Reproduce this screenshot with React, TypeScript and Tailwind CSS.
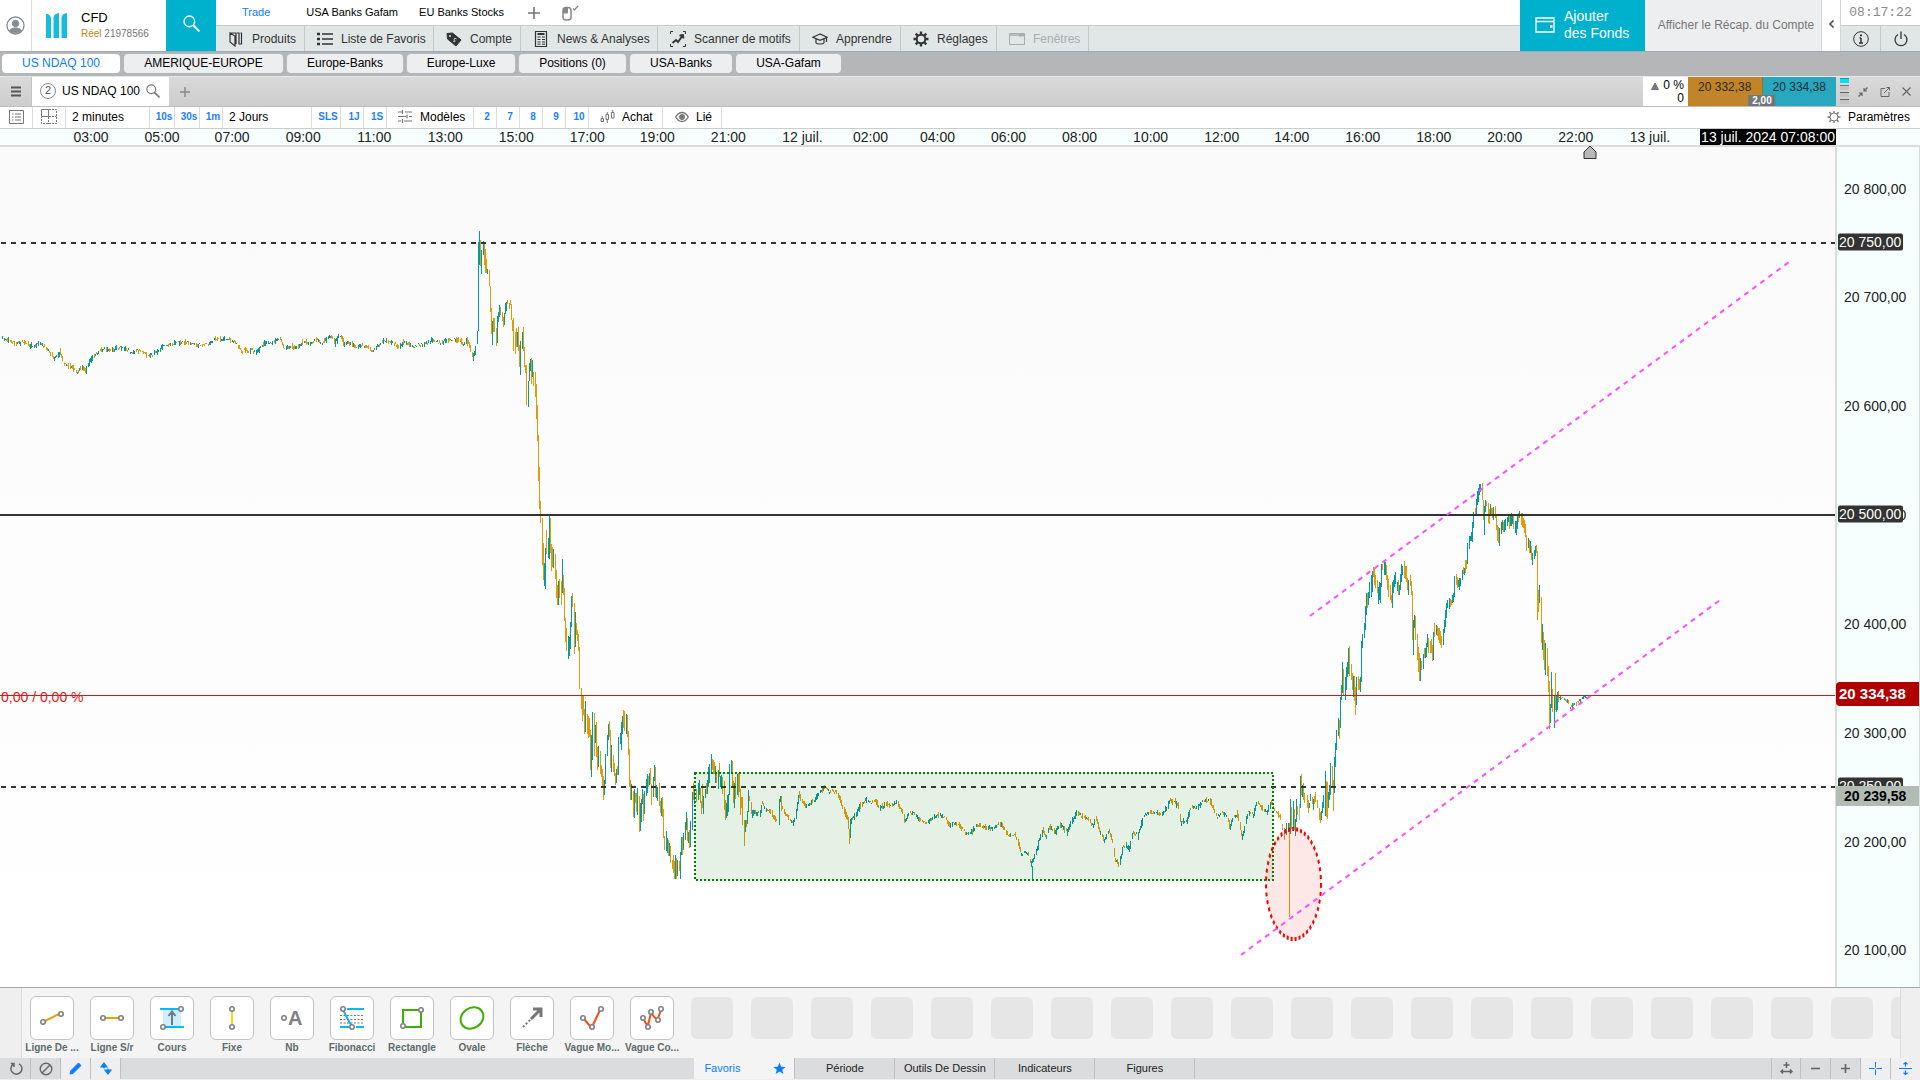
import React from 'react';

const TEAL = '#069b9b';
const ORANGE = '#e39a08';

/* ---------- chart data (pixel space of the plot: x 0..1835, y 147..987) ---------- */

const QUIET: number[][][] = [
  [[2,338],[8,340],[16,344],[22,342],[33,346],[40,343],[47,349],[54,358],[60,353],[64,364],[70,366],[77,372],[80,368],[86,371],[89,362],[92,357],[98,352],[104,349],[112,350],[119,347],[126,349],[131,353],[138,351],[144,353],[150,356],[156,352],[163,346],[176,343],[188,342],[198,345],[210,344],[214,340],[229,339],[237,344],[242,352],[245,349],[248,353],[251,349],[256,354],[260,347],[265,343],[273,343],[280,339],[284,348],[291,346],[296,349],[304,341],[309,345],[316,339],[321,343],[328,338],[331,336],[335,343],[338,337],[341,336],[344,344],[351,343],[355,347],[361,345],[367,347],[373,351],[380,343],[386,341],[392,342],[399,347],[404,342],[414,346],[424,344],[433,340],[440,343],[449,339],[459,340],[463,344],[467,340],[471,352],[473,356],[476,346]],
  [[755,812],[760,814],[762,803],[765,808],[770,811],[774,818],[778,820]],
  [[782,808],[785,814],[790,821],[793,823],[796,815],[798,799],[799,795],[803,803],[806,806],[810,804],[815,799],[820,791],[825,787],[829,792],[832,790],[836,793],[840,800],[843,808],[846,815],[850,825],[852,818],[856,814],[860,806],[865,800],[870,803],[875,801],[880,809],[885,804],[890,806],[897,803],[902,811],[905,821],[909,812],[915,815],[920,820],[927,823],[937,815],[945,817],[950,827],[953,823],[960,826],[966,834],[970,834],[977,825],[987,827],[993,828],[997,824],[1002,825],[1008,835],[1015,835],[1018,842],[1021,855],[1024,852],[1028,855],[1031,865],[1034,857],[1036,853],[1039,840],[1043,830],[1046,837],[1049,827],[1055,832],[1060,824],[1067,832],[1072,820],[1077,812],[1082,817],[1087,818],[1093,825],[1096,817],[1100,833],[1104,840],[1109,832],[1113,843],[1115,860],[1119,865],[1122,852],[1123,845],[1129,848],[1133,833],[1138,835],[1143,818],[1148,812],[1157,813],[1162,814],[1166,808],[1170,800],[1175,802],[1178,807],[1181,823],[1187,820],[1190,808],[1197,808],[1203,800],[1210,802],[1217,817],[1222,812],[1227,817],[1230,827],[1233,817],[1237,815],[1240,827],[1242,837],[1246,820],[1248,812],[1253,815],[1257,802],[1263,810],[1267,812],[1271,802],[1275,812],[1280,818],[1283,830]],
  [[1559,697],[1564,699],[1568,702],[1570,708],[1573,705],[1578,702],[1583,697],[1590,696]],
];

/* x, high, low, direction (t = up, o = down) */
const ACTIVE = `477 331 344 t,478 242 331 t,479 231 265 t,480 240 266 o,481 250 274 t,483 241 255 t,484 242 265 o,485 249 273 o,486 259 273 o,487 269 274 t,489 270 286 o,490 286 312 o,491 308 334 o,492 321 345 t,493 318 332 o,494 318 332 o,496 328 346 o,497 316 343 t,498 312 322 t,499 305 317 t,500 307 315 o,502 312 321 o,503 317 327 o,504 313 325 t,505 303 314 t,506 302 311 t,507 300 304 o,509 303 309 o,510 300 305 o,511 304 320 o,512 320 331 o,513 318 351 o,515 332 354 o,516 328 347 o,517 332 347 t,518 327 351 o,519 345 367 o,520 341 375 t,522 332 349 t,523 327 351 o,524 347 367 o,525 365 373 o,526 365 405 o,528 381 407 t,529 363 381 t,530 359 371 t,531 358 384 o,532 360 377 t,533 372 386 o,535 372 397 o,536 384 419 o,537 405 441 o,538 435 481 o,539 467 509 o,540 501 523 o,
542 518 565 o,543 543 580 o,544 563 586 t,545 548 589 t,546 530 554 o,548 538 558 t,549 516 559 t,550 518 553 o,551 544 571 o,552 547 567 o,553 549 568 t,555 554 579 o,556 570 598 o,557 585 605 o,558 581 605 t,559 579 598 o,561 581 605 o,562 559 593 t,563 575 595 o,564 588 621 o,565 618 642 o,566 628 651 o,568 636 659 t,569 637 656 t,570 622 649 t,571 596 627 t,572 593 607 o,574 603 654 o,575 612 647 t,576 623 635 o,577 630 641 o,578 634 651 o,579 647 689 o,581 688 709 o,582 695 721 o,583 695 715 o,584 709 734 o,585 701 732 t,587 714 734 o,588 716 738 o,589 718 737 o,590 730 770 o,591 735 777 t,592 712 760 t,594 713 756 o,595 725 743 t,596 722 757 o,597 747 770 o,598 746 767 t,600 751 774 o,601 765 777 o,602 769 786 o,603 776 800 o,604 780 795 t,605 754 784 t,607 735 756 t,608 724 740 t,609 721 737 o,610 730 768 o,611 745 772 t,613 755 772 o,614 763 776 o,615 773 785 o,616 769 783 t,617 766 775 o,618 737 775 t,620 733 744 t,621 722 750 t,622 716 734 t,623 710 728 o,624 711 731 o,626 714 734 t,627 715 737 o,628 731 755 o,629 749 787 o,630 780 800 o,631 784 800 t,633 791 817 o,634 789 818 t,635 793 803 o,636 793 812 o,637 788 815 t,639 796 832 o,640 803 831 t,641 799 822 t,642 789 804 t,643 794 821 o,644 791 814 t,646 779 796 t,647 774 793 t,648 776 787 o,649 773 785 t,650 768 784 o,651 784 805 o,653 777 797 t,654 765 781 t,655 767 797 o,656 785 798 t,657 787 801 t,659 783 806 o,660 801 813 o,661 798 816 t,662 797 817 o,663 809 838 o,664 836 850 o,666 831 851 t,667 838 853 t,668 840 856 o,669 843 856 t,670 846 863 o,672 860 869 o,673 855 873 o,674 861 879 o,675 855 879 t,676 858 879 o,677 860 876 t,679 861 871 o,680 852 879 t,681 837 855 t,682 837 855 o,683 833 850 t,685 822 840 t,686 812 830 t,687 818 841 o,688 832 843 t,689 830 848 o,690 821 847 t,692 792 830 t,693 783 800 o,694 789 804 t,696 789 802 o,698 783 800 t,699 780 795 t,700 788 803 o,701 801 814 o,702 784 808 o,703 796 814 t,705 789 798 t,706 783 794 o,707 780 794 t,708 767 787 t,709 764 783 t,711 754 774 t,712 759 770 o,713 760 774 o,714 762 774 o,715 766 783 t,716 773 783 o,718 770 789 t,719 763 777 o,720 776 787 t,721 775 789 t,722 777 794 o,724 781 810 o,725 800 820 o,726 803 818 t,727 795 816 t,728 794 812 t,729 764 795 t,731 760 774 t,732 761 787 o,733 781 803 o,734 783 808 t,735 777 799 o,737 774 795 t,738 773 797 o,739 773 792 o,740 789 815 o,741 797 808 o,742 797 825 o,744 820 846 o,745 820 832 t,746 820 827 o,747 811 824 t,748 790 812 t,749 796 801 o,751 802 814 o,752 810 818 t,753 810 816 t,754 810 814 t,
779 799 825 t,780 796 802 t,781 796 811 o,848 820 829 o,849 829 844 o,850 819 838 t,1032 866 879 t,
1284 828 840 o,1286 823 835 t,1288 823 832 t,1289 823 917 o,1290 799 834 t,1291 807 829 o,1293 801 828 t,1294 809 830 o,1295 819 836 t,1296 799 822 t,1297 806 815 o,1300 776 808 t,1301 774 795 o,1302 785 797 t,1303 783 800 o,1304 793 803 o,1307 795 808 o,1308 800 813 o,1309 803 808 t,1310 794 801 t,1312 797 804 o,1313 799 810 t,1314 796 804 o,1315 792 802 o,1317 800 808 o,1319 808 820 o,1320 812 823 o,1321 811 820 t,1322 802 813 t,1323 795 808 t,1325 771 816 t,1326 781 817 o,1327 782 819 o,1328 792 808 t,1329 785 800 t,1330 763 795 t,1332 766 787 o,1333 780 811 o,1334 757 793 t,1335 743 767 t,1336 730 750 t,1338 718 736 t,1339 720 739 o,1340 697 728 t,1341 685 700 t,1342 662 693 t,1343 669 695 o,1345 677 700 t,1346 667 690 t,1347 662 677 t,1348 648 674 t,1349 646 676 o,1351 664 680 o,1352 673 690 o,1353 676 697 t,1354 676 701 o,1355 687 715 o,1356 677 705 t,1358 676 690 o,1359 679 690 o,1360 677 692 t,1361 641 682 t,1362 634 648 t,1364 623 638 t,1365 606 630 t,1366 593 615 t,1367 593 608 o,1368 592 605 t,1369 582 598 t,1371 575 597 t,1372 571 592 t,1373 567 577 o,1374 568 585 o,1375 575 588 o,1377 580 593 o,1378 587 604 t,1379 582 600 t,1380 583 603 t,1381 564 587 t,1382 564 570 o,1384 562 575 t,1385 562 575 t,1386 565 580 o,1387 575 590 o,1388 579 597 o,1390 585 600 o,1391 595 603 o,1392 582 608 t,1393 580 593 t,1394 575 587 t,1395 572 584 t,1397 582 591 t,1398 580 595 o,1399 585 595 t,1400 574 590 t,1401 564 582 t,1402 566 575 t,1404 561 578 o,1405 566 579 o,1406 566 582 o,1407 578 590 o,1408 580 595 t,1410 575 586 o,1411 581 595 o,1412 591 640 o,1413 620 655 t,1414 615 628 t,1415 616 640 o,1417 634 660 o,1418 647 672 o,1419 653 681 o,1420 658 681 t,1421 661 670 o,1423 654 669 t,1424 648 658 o,1425 648 658 t,1426 643 657 t,1427 634 647 t,1428 638 653 o,1430 641 653 o,1431 639 653 o,1432 645 661 o,1433 632 660 t,1434 623 637 o,1436 625 635 t,1437 626 636 o,1438 628 640 o,1439 628 643 o,1440 631 645 o,1441 636 648 o,1443 629 645 t,1444 620 633 t,1445 610 627 t,1446 603 618 t,1447 600 608 t,1449 598 609 t,1450 599 607 o,1451 600 605 o,1452 595 603 t,1453 593 602 t,1454 576 597 t,1456 574 585 o,1457 577 588 o,1458 580 587 t,1459 578 590 t,1460 578 586 t,1462 570 580 t,1463 567 574 o,1464 568 575 t,1465 560 573 o,1466 560 569 o,1467 543 564 t,1469 536 549 t,1470 536 541 t,1471 532 541 t,1472 522 542 t,1473 512 528 t,1475 508 516 o,1476 499 515 t,1477 491 505 t,1478 488 502 t,1479 484 495 t,1480 484 492 t,1482 483 500 o,1483 500 520 o,1484 506 535 t,1485 500 512 t,1486 501 506 o,1488 503 523 o,1489 509 524 o,1490 504 516 t,1491 508 515 o,1492 508 518 o,1493 507 520 t,1495 506 518 o,1496 514 530 o,1497 525 541 o,1498 527 543 o,1499 528 546 t,1501 522 534 t,1502 520 530 t,1503 522 532 o,1504 520 532 t,1505 519 530 t,1507 517 526 t,1508 514 522 t,1509 515 529 o,1510 515 526 t,1511 513 526 t,1512 514 524 t,1513 515 529 o,1515 521 533 t,1516 521 535 t,1517 514 529 t,1518 513 522 o,1519 511 518 t,1521 513 525 o,1522 513 527 o,1523 518 528 o,1524 520 533 o,1525 524 537 o,1526 535 551 o,1528 538 548 t,1529 540 553 o,1530 541 553 t,1531 546 560 o,1532 553 565 t,1534 550 559 t,1535 546 556 t,1536 545 553 o,1537 551 620 o,1538 590 612 o,1539 585 603 t,1541 597 643 o,1542 624 650 t,1543 632 660 o,1544 640 670 o,1545 643 675 t,1547 648 676 o,1548 666 692 o,1549 681 729 o,1550 704 723 t,1551 672 708 t,1552 689 712 o,1554 695 728 t,1555 673 710 o,1556 695 712 t,1557 692 710 t,1558 691 702 o`;

function buildPaths() {
  let up = '';
  let down = '';
  const add = (x: number, hi: number, lo: number, isUp: boolean) => {
    const seg = `M${x} ${hi}h1V${lo}h-1z`;
    if (isUp) up += seg;
    else down += seg;
  };
  let seed = 11;
  const rnd = () => {
    seed = (seed * 1103515245 + 12345) % 2147483648;
    return seed / 2147483648;
  };
  for (const pts of QUIET) {
    const calm = pts[0][0] === 1559;
    for (let i = 0; i < pts.length - 1; i++) {
      const [x0, y0] = pts[i];
      const [x1, y1] = pts[i + 1];
      for (let x = x0; x < x1; x++) {
        const r = rnd();
        const q = rnd();
        if (x % 6 === 3) continue;
        const slope = (y1 - y0) / (x1 - x0);
        const mid = y0 + slope * (x - x0) + (q - 0.5) * 2.4;
        const size = 0.8 + r * r * (calm ? 3 : 5) + Math.abs(slope);
        const hi = Math.round(mid - size / 2);
        add(x, hi, hi + Math.max(1, Math.round(size)), rnd() > 0.5 + slope * 0.25);
      }
    }
  }
  for (const bar of ACTIVE.split(',')) {
    const [x, hi, lo, dir] = bar.trim().split(' ');
    add(+x, +hi, +lo, dir === 't');
  }
  return { up, down };
}
const PATHS = buildPaths();

const TIMES: [string, number][] = [
  ['03:00', 91], ['05:00', 162], ['07:00', 232], ['09:00', 303], ['11:00', 374], ['13:00', 445], ['15:00', 516],
  ['17:00', 587], ['19:00', 657], ['21:00', 728], ['12 juil.', 802], ['02:00', 870], ['04:00', 937], ['06:00', 1008],
  ['08:00', 1079], ['10:00', 1150], ['12:00', 1221], ['14:00', 1291], ['16:00', 1362], ['18:00', 1433], ['20:00', 1504],
  ['22:00', 1575], ['13 juil.', 1649],
];
const PRICES: [string, number][] = [
  ['20 800,00', 189], ['20 700,00', 297], ['20 600,00', 406], ['20 500,00', 515], ['20 400,00', 624],
  ['20 300,00', 733], ['20 200,00', 842], ['20 100,00', 950],
];
const pctX = (x: number) => `${(x / 1835) * 100}%`;
const pctY = (y: number) => `${((y - 147) / 840) * 100}%`;

/* ---------- icons ---------- */

type P = { children: React.ReactNode; w?: number; h?: number; vb?: string; sw?: number; c?: string };
const Ic = ({ children, w = 16, h = 16, vb = '0 0 16 16', sw = 1, c = '' }: P) => (
  <svg width={w} height={h} viewBox={vb} fill="none" stroke="currentColor" strokeWidth={sw} className={`shrink-0 ${c}`} aria-hidden="true">
    {children}
  </svg>
);
const Magnifier = ({ size, sw = 1 }: { size: number; sw?: number }) => (
  <Ic w={size} h={size} sw={sw}><circle cx="6" cy="6" r="5" /><path d="M9.6 9.6L15.4 15.4" strokeWidth={sw * 1.4} /></Ic>
);
const Dot = ({ x, y }: { x: number; y: number }) => <circle cx={x} cy={y} r="2.2" stroke="#808080" strokeWidth="1.6" fill="#fff" />;

const NAV: { label: string; w: string; icon: React.ReactNode; off?: boolean }[] = [
  { label: 'Produits', w: 'w-[89px]', icon: <Ic><path d="M2 2h6v11M2 2v9l5 4V5L2 2zM9 2h2v11M12.5 2h1v11h-3" strokeWidth="1.2" /></Ic> },
  { label: 'Liste de Favoris', w: 'w-[129px]', icon: <Ic><path d="M5 3h11M5 8h11M5 13h11" strokeWidth="1.4" /><path d="M0 3h3M0 8h3M0 13h3" strokeWidth="2.4" /></Ic> },
  { label: 'Compte', w: 'w-[87px]', icon: <Ic><path d="M1 2.5L6.5 2 15 9l-5 6L1.5 8z" fill="currentColor" /><circle cx="4" cy="5" r="1" fill="#e1e7e7" stroke="none" /><path d="M10.5 8c-2-1.5-3 0-2 1s.5 2.500-1.500 1" stroke="#e1e7e7" /></Ic> },
  { label: 'News & Analyses', w: 'w-[137px]', icon: <Ic><path d="M2.500.5h11v15h-11z" strokeWidth="1.2" /><path d="M4.500 3h7" strokeWidth="2" /><path d="M4.500 6h3M9 6h3M4.500 8.500h3M9 8.500h3M4.500 11h3M9 11h3M4.500 13.200h3M9 13.200h3" /></Ic> },
  { label: 'Scanner de motifs', w: 'w-[142px]', icon: <Ic><path d="M.5 3V.5H3M13 .5h2.500V3M15.500 13v2.500H13M3 15.500H.5V13" /><path d="M2.500 12l3.500-3 2 2 5-7M9.500 4.500l3.500-.5.5 3.500" strokeWidth="1.8" /></Ic> },
  { label: 'Apprendre', w: 'w-[101px]', icon: <Ic><path d="M8 3L.8 6.200 8 9.300l7.200-3.100zM4 8v4c1 1.300 7 1.300 8 0V8M14.500 7v4" strokeWidth="1.200" /></Ic> },
  { label: 'Réglages', w: 'w-[96px]', icon: <Ic><circle cx="8" cy="8" r="4.300" strokeWidth="2" /><path d="M8 .5v3M8 12.500v3M.5 8h3M12.500 8h3M2.700 2.700l2 2M11.300 11.300l2 2M13.300 2.700l-2 2M2.700 13.300l2-2" strokeWidth="2.400" /></Ic> },
  { label: 'Fenêtres', w: 'w-[92px]', off: true, icon: <Ic><path d="M.5 2.500h15v11H.5z" /><path d="M1 4h9" strokeWidth="1.500" /><path d="M10 4h5.500" strokeWidth="3" /></Ic> },
];

const TABS: [string, string][] = [
  ['US NDAQ 100', 'w-[118px]'], ['AMERIQUE-EUROPE', 'w-[159px]'], ['Europe-Banks', 'w-[116px]'], ['Europe-Luxe', 'w-[108px]'],
  ['Positions (0)', 'w-[107px]'], ['USA-Banks', 'w-[102px]'], ['USA-Gafam', 'w-[105px]'],
];

const TOOLS: [string, React.ReactNode][] = [
  ['Ligne De ...', <><path d="M15 25L29 18" stroke="#dba507" strokeWidth="2" /><Dot x={13} y={26} /><Dot x={31} y={18} /></>],
  ['Ligne S/r', <><path d="M15 22h14" stroke="#dba507" strokeWidth="2" /><Dot x={13} y={22} /><Dot x={31} y={22} /></>],
  ['Cours', <><path d="M13 13h18v17H13z" fill="#cceffd" /><path d="M10 13h19M14 31h20" stroke="#05b8f8" strokeWidth="2" /><path d="M22 29V16M18.500 20L22 15.500 25.500 20" stroke="#707a80" strokeWidth="2" /><Dot x={31} y={13} /><Dot x={13} y={31} /></>],
  ['Fixe', <><path d="M22 16v12" stroke="#ffd21a" strokeWidth="2" /><Dot x={22} y={13} /><Dot x={22} y={31} /></>],
  ['Nb', <><Dot x={14} y={22} /><text x="18" y="29" fontSize="20" fontFamily="Liberation Sans, Arial, sans-serif" fill="#808080" stroke="none">A</text></>],
  ['Fibonacci', <><path d="M10 19.500h24M10 23.500h24M10 27h24" stroke="#777" strokeDasharray="2 1.500" /><path d="M17 13h17M10 31h9M26 31h8M13 14l8 15" stroke="#05b8f8" strokeWidth="2" /><Dot x={13} y={13} /><Dot x={22} y={31} /></>],
  ['Rectangle', <><path d="M13 14h18v17H13z" stroke="#3cae04" strokeWidth="2" /><Dot x={31} y={14} /><Dot x={13} y={30} /></>],
  ['Ovale', <ellipse cx="22" cy="22" rx="12" ry="10" transform="rotate(-35 22 22)" stroke="#3cae04" strokeWidth="2" />],
  ['Flèche', <><path d="M13 31l8-8" stroke="#777" strokeWidth="2" strokeDasharray="2 2" /><path d="M21 23l9-9M23 13h8v8" stroke="#777" strokeWidth="3" /></>],
  ['Vague Mo...', <><path d="M14 23l6 7M23 29l7-15" stroke="#fb4a12" strokeWidth="2" /><Dot x={13} y={22} /><Dot x={22} y={31} /><Dot x={31} y={13} /></>],
  ['Vague Co...', <><path d="M14 24l3 5M18 29l3-12M22 18l4 5M28 22l3-8" stroke="#fb4a12" strokeWidth="2" /><Dot x={13} y={22} /><Dot x={18} y={31} /><Dot x={21} y={16} /><Dot x={28} y={24} /><Dot x={31} y={13} /></>],
];

const Quick = ({ items, w }: { items: string[]; w: string }) => (
  <>{items.map((t) => <button key={t} className={`${w} shrink-0 border-r border-[#dcdcdc] pl-1 text-[10px] font-bold text-[#1a80ff]`}>{t}</button>)}</>
);

function Header() {
  return (
    <header className="flex h-[51px] shrink-0 bg-white">
      <button aria-label="Profil" className="flex w-8 shrink-0 items-center justify-center border-r border-[#dcdcdc] text-[#888c8e]">
        <Ic w={19} h={19} vb="0 0 19 19"><circle cx="9.500" cy="9.500" r="8.500" strokeWidth="1.300" /><circle cx="9.500" cy="7.500" r="3.200" fill="currentColor" /><path d="M3.500 14.500c2-3.500 10-3.500 12 0-2 3-10 3-12 0z" fill="currentColor" /></Ic>
      </button>
      <div className="flex w-[134px] shrink-0 items-center gap-[14px] pl-[14px]">
        <svg width="21" height="25" viewBox="0 0 21 25" fill="#13bddb" className="shrink-0" aria-label="Logo"><path d="M0 1c3 0 5 1.500 5 5v19H0zM13 0v25H7.500V4.500C7.500 2 10 .5 13 0zM21 0v25h-5.500V4.500C15.500 2 18 .5 21 0z" /></svg>
        <div className="leading-4">
          <div className="text-[13px] text-black">CFD</div>
          <div className="text-[10px] whitespace-nowrap text-[#777]"><span className="text-[#b8860b]">Réel</span> 21978566</div>
        </div>
      </div>
      <button aria-label="Rechercher" className="flex w-[50px] shrink-0 items-center justify-center bg-[#00b1ce] pb-1 text-white"><Magnifier size={17} sw={1.3} /></button>
      <div className="flex min-w-0 flex-1 flex-col">
        <div className="flex h-[26px] items-center border-b border-[#c6cacb] text-[11px] text-black">
          <button className="ml-[26px] text-[#0a7cff]">Trade</button>
          <button className="ml-9">USA Banks Gafam</button>
          <button className="ml-[21px]">EU Banks Stocks</button>
          <button aria-label="Ajouter un espace" className="ml-6 text-[#777]"><Ic w={12} h={12} vb="0 0 12 12" sw={1.6}><path d="M6 0v12M0 6h12" /></Ic></button>
          <button aria-label="Ordre en un clic" className="ml-[22px] text-[#888]"><Ic w={17} h={16} vb="0 0 17 16"><rect x="1" y="2.500" width="8" height="12.500" rx="3" strokeWidth="1.500" /><path d="M1.500 8V5q0-2 4-2V8z" fill="currentColor" /><path d="M11 3.500l1.500 1.500L16 .8" strokeWidth="1.300" /></Ic></button>
        </div>
        <nav className="flex h-[25px] bg-[#e1e7e7]">
          {NAV.map((n) => (
            <button key={n.label} disabled={n.off} className={`${n.w} flex shrink-0 items-center gap-2 border-r border-[#c3c8c9] pl-3 text-xs whitespace-nowrap ${n.off ? 'text-[#a9adae]' : 'text-[#333]'}`}>
              {n.icon}{n.label}
            </button>
          ))}
        </nav>
      </div>
      <button className="flex w-[125px] shrink-0 items-center gap-[9px] bg-[#00b1ce] pb-[2px] pl-[15px] text-left text-sm leading-[17px] text-white">
        <Ic w={20} h={16} vb="0 0 20 16" sw={1.3}><path d="M1 1h18v14H1zM1 4.500h18" /><path d="M15 9.500h2.500" strokeWidth="2.500" /></Ic>
        <span>Ajouter<br />des Fonds</span>
      </button>
      <button className="w-[177px] shrink-0 border-r border-[#d5d5d5] bg-[#edeef0] pb-[2px] pl-[6px] text-xs whitespace-nowrap text-[#777]">Afficher le Récap. du Compte</button>
      <button aria-label="Réduire" className="flex w-[19px] shrink-0 items-center justify-center border-r border-[#d5d5d5] pb-1 text-[#555]"><Ic w={5} h={8} vb="0 0 5 8" sw={1.6}><path d="M4.500.5L1 4l3.500 3.500" /></Ic></button>
      <div className="flex w-[79px] shrink-0 flex-col">
        <div className="flex h-[26px] items-center justify-center border-b border-[#c6cacb] font-['Liberation_Mono',monospace] text-[13px] text-[#8a8a8a]">08:17:22</div>
        <div className="flex h-[25px] bg-[#e1e7e7] text-[#333]">
          <button aria-label="Informations" className="flex flex-1 items-center justify-center border-r border-[#c3c8c9]"><Ic><circle cx="8" cy="8" r="7.300" /><path d="M8 7v5M6.500 7H8M6 12h4" strokeWidth="1.500" /><path d="M8 3.500v1.700" strokeWidth="2" /></Ic></button>
          <button aria-label="Déconnexion" className="flex flex-1 items-center justify-center"><Ic sw={1.3}><path d="M5 3.500a6 6 0 1 0 6 0M8 .5v7.500" /></Ic></button>
        </div>
      </div>
    </header>
  );
}

function InstrumentBar() {
  return (
    <div className="flex h-[31px] shrink-0 border-t border-b border-t-[#e6e6e6] border-b-[#bdbdbd] bg-linear-to-b from-[#dadada] to-[#cdcdcd]">
      <button aria-label="Menu" className="flex w-8 shrink-0 items-center justify-center border-r border-[#c4c4c4] text-[#555]"><Ic w={10} h={11} vb="0 0 10 11" sw={1.8}><path d="M0 1.500h10M0 5.500h10M0 9.500h10" /></Ic></button>
      <div className="flex w-[137px] shrink-0 items-center gap-[6px] bg-white pb-[2px] pl-2 text-xs text-black">
        <span className="flex size-4 shrink-0 items-center justify-center rounded-full border border-[#888] text-[11px] text-[#555]">2</span>
        <span className="whitespace-nowrap">US NDAQ 100</span>
        <button aria-label="Rechercher un instrument" className="text-[#777]"><Magnifier size={14} sw={1.3} /></button>
      </div>
      <button aria-label="Nouvel onglet" className="w-8 shrink-0 pl-[11px] text-[#888]"><Ic w={10} h={10} vb="0 0 10 10" sw={1.4}><path d="M5 0v10M0 5h10" /></Ic></button>
      <div className="flex-1" />
      <div className="w-[45px] shrink-0 bg-white pr-1 text-right text-xs leading-[13px] text-black">
        <div className="flex items-center justify-end gap-1 pt-[2px]"><Ic w={8} h={8} vb="0 0 8 8" c="text-[#777]"><path d="M4 1l3.500 6.500h-7z" fill="currentColor" /></Ic>0 %</div>
        <div>0</div>
      </div>
      <div className="relative flex w-[148px] shrink-0 text-xs">
        <button className="flex-1 border-r border-[#a0701f] bg-[#c08529] pb-[9px] text-[#33260c]">20 332,38</button>
        <button className="flex-1 bg-[#27a8bf] pb-[9px] text-[#0c2d33]">20 334,38</button>
        <span className="absolute bottom-0 left-1/2 -translate-x-1/2 bg-[#70777a] px-[4px] text-[10px] leading-[11px] font-bold text-white">2,00</span>
      </div>
      <div className="flex w-[14px] shrink-0 flex-col gap-[2px] pt-px pl-1">
        <span className="h-[5px] w-[9px] border-t border-[#0aa] bg-[#05defb]" />
        <span className="h-[5px] w-[9px] border-t border-[#777] bg-[#c4c4c4]" />
        <span className="h-[5px] w-[9px] border-t border-[#666] bg-[#c4c4c4]" />
        <span className="h-[5px] w-[9px] border-t border-[#666] bg-[#c4c4c4]" />
      </div>
      <div className="flex w-[70px] shrink-0 items-center justify-between pr-[9px] pl-2 text-[#666]">
        <button aria-label="Réduire la fenêtre"><Ic w={10} h={10} vb="0 0 10 10" sw={1.2}><path d="M9.500.5L6 4M6 1v3h3M.5 9.500L4 6M1 6h3v3" /></Ic></button>
        <button aria-label="Détacher"><Ic w={10} h={10} vb="0 0 10 10"><path d="M5 1.500H1v8h8V5M4 6l5.500-5.500M6.500.5h3v3" /></Ic></button>
        <button aria-label="Fermer"><Ic w={9} h={9} vb="0 0 9 9" sw={1.2}><path d="M.5.5l8 8M8.500.5l-8 8" /></Ic></button>
      </div>
    </div>
  );
}

function Toolbar() {
  const cell = 'shrink-0 border-r border-[#dcdcdc] text-xs text-black';
  return (
    <div className="flex h-[22px] shrink-0 border-b border-[#cccccc] bg-white [&>button]:pb-[2px]">
      <button aria-label="Liste" className={`${cell} flex w-[33px] items-center justify-center`}><Ic w={15} h={14} vb="0 0 15 14" c="text-[#777]"><path d="M.5.5h14v13H.5zM6 4h6M6 7h6M6 10h6M3 4h1.500M3 7h1.500M3 10h1.500" /></Ic></button>
      <button aria-label="Disposition" className={`${cell} flex w-[33px] items-center justify-center`}><Ic w={16} h={15} vb="0 0 16 15" c="text-[#777]"><path d="M.5.5h7v7h-7z" /><path d="M8 .5h7.500V14.500H.5V8M8 7.500h7.500M7.500 8v7" strokeDasharray="2 1" /></Ic></button>
      <button className={`${cell} w-[84px] pl-[6px] text-left`}>2 minutes</button>
      <Quick items={['10s', '30s']} w="w-[25px]" /><Quick items={['1m']} w="w-[23px]" />
      <button className={`${cell} w-[89px] pl-[6px] text-left`}>2 Jours</button>
      <Quick items={['SLS']} w="w-[29px]" /><Quick items={['1J', '1S']} w="w-[23px]" />
      <button className={`${cell} flex w-[87px] items-center gap-2 pl-[11px]`}><Ic w={14} h={13} vb="0 0 14 13" sw={1.2} c="text-[#777]"><path d="M0 2h4M7 2h7M0 6.500h8M11 6.500h3M0 11h3M6 11h8M4.500 0v4M9 4.500v4M4.500 9v4" /></Ic>Modèles</button>
      <Quick items={['2', '7', '8', '9', '10']} w="w-[23px]" />
      <button className={`${cell} flex w-[74px] items-center gap-[7px] pl-[11px]`}><Ic w={15} h={13} vb="0 0 15 13" c="text-[#777]"><path d="M1 8.500h2.500v3H1zM2.250 6v2.500M6 4.500h2.500v5H6zM7.250 2v2.500M7.250 9.500V13M11.500 2.500H14v5.500h-2.500zM12.750 0v2.500" /></Ic>Achat</button>
      <button className={`${cell} flex w-[59px] items-center gap-[7px] pl-3`}><Ic w={14} h={12} vb="0 0 14 12" sw={1.3} c="text-[#777]"><path d="M.7 6C4 0 10 0 13.300 6 10 12 4 12 .7 6z" /><circle cx="7" cy="6" r="2.300" fill="currentColor" /></Ic>Lié</button>
      <div className="flex-1" />
      <button className="flex shrink-0 items-center gap-[7px] pr-[10px] text-xs text-black"><Ic w={14} h={14} vb="0 0 14 14" c="text-[#777]"><circle cx="7" cy="7" r="4" /><path d="M7 3V1M7 11v2M3 7H.5M11 7h2.500M4 4L2.500 2M10 4l1.500-2M4 10l-1.500 2M10 10l1.500 2" strokeWidth="1.300" /></Ic>Paramètres</button>
    </div>
  );
}

function Chart() {
  return (
    <main className="flex min-h-0 flex-1">
      <div className="relative min-w-0 flex-1 border-r-2 border-[#dcdcdc] bg-linear-to-b from-[#fafafa] to-white">
        <svg className="absolute inset-0 h-full w-full" viewBox="0 147 1835 840" preserveAspectRatio="none" fill="none" role="img" aria-label="Graphique US NDAQ 100">
          <g shapeRendering="crispEdges">
            <path d={PATHS.up} fill={TEAL} />
            <path d={PATHS.down} fill={ORANGE} />
            <path d="M1299.5 804v16" stroke="#b5b5b5" />
            <path d="M0 243H1835M0 787H1835" stroke="#333" strokeWidth="2" strokeDasharray="5 5" strokeDashoffset="-1" />
            <path d="M0 515H1835" stroke="#333" strokeWidth="2" />
            <path d="M0 695.5H1835" stroke="#dc1414" />
            <rect x="695" y="773" width="578" height="107" fill="#008000" fillOpacity="0.1" stroke="#008000" strokeWidth="2" strokeDasharray="2 2" />
          </g>
          <circle r="27.5" transform="translate(1293.5 884) scale(1 2)" fill="#ff0000" fillOpacity="0.09" stroke="#ff0000" strokeWidth="2" strokeDasharray="2 2" />
          <path d="M1310 616L1789 262M1241 955L1720 600" stroke="#ff4dff" strokeWidth="2" strokeDasharray="5 5" />
        </svg>
        <svg width="15" height="15" viewBox="0 0 15 15" className="absolute -top-[2px] -translate-x-1/2" style={{ left: pctX(1590) }} aria-hidden="true"><path d="M7.500 1L13.500 7v6.500h-12V7z" fill="#b9b9b9" stroke="#333" /></svg>
        <span className="absolute left-px -translate-y-1/2 text-sm leading-4 text-[#e01a1a]" style={{ top: pctY(697) }}>0,00 / 0,00 %</span>
      </div>
      <div className="relative w-[83px] shrink-0 border-r border-[#dcdcdc] bg-[#f6fffe] text-sm leading-4 whitespace-nowrap text-[#222]">
        {PRICES.map(([t, y]) => <span key={t} className="absolute left-[7px] -translate-y-1/2" style={{ top: pctY(y) }}>{t}</span>)}
        {([['20 750,00', 242], ['20 500,00', 514], ['20 250,00', 786]] as [string, number][]).map(([t, y]) => (
          <span key={t} className="absolute left-px -translate-y-1/2 rounded-xs bg-[#333] pr-[2px] pl-px leading-[17px] text-white" style={{ top: pctY(y) }}>{t}</span>
        ))}
        <span className="absolute -left-px w-[83px] -translate-y-1/2 bg-[#b1bcb4] pl-2 leading-5 font-bold text-black" style={{ top: pctY(796) }}>20 239,58</span>
        <span className="absolute -left-px w-[83px] -translate-y-1/2 rounded-l-sm bg-[#b10000] pl-[3px] text-[15px] leading-6 font-bold text-white" style={{ top: pctY(694) }}>20 334,38</span>
      </div>
    </main>
  );
}

function BottomBar() {
  const b = 'flex shrink-0 items-center justify-center border-r border-[#bfc0c2]';
  return (
    <footer className="flex h-[22px] shrink-0 border-b border-[#eeeeee] bg-[#dbdcde] pl-[2px] text-[11px] text-[#222]">
      <div className="flex w-[36.1%] shrink-0 text-[#666]">
        <button aria-label="Rafraîchir" className={`${b} w-[29px]`}><Ic w={13} h={13} vb="0 0 13 13" sw={1.5}><path d="M9 1.800A5.500 5.500 0 1 1 3.500 2M.8 1.500h3.200V5" /></Ic></button>
        <button aria-label="Masquer" className={`${b} w-[30px]`}><Ic w={14} h={14} vb="0 0 14 14" sw={1.4}><circle cx="7" cy="7" r="5.800" /><path d="M3 11L11 3" /></Ic></button>
        <button aria-label="Dessiner" className={`${b} w-[30px] bg-[#efeff1] text-[#0a7cff]`}><Ic w={13} h={13} vb="0 0 13 13"><path d="M1 12l.8-3.200L9.500 1l2.500 2.500L4.200 11.200z" fill="currentColor" /></Ic></button>
        <button aria-label="Déplacer" className={`${b} w-[30px] bg-[#efeff1] text-[#0a7cff]`}><Ic w={12} h={13} vb="0 0 12 13" sw={1.2}><path d="M4 1L7 5H1zM8 12l3-4H5z" fill="currentColor" /><path d="M4 5v1.500M8 8V6.500" /></Ic></button>
      </div>
      <div className="flex shrink-0">
        <button className="flex w-[101px] items-center justify-between border-r border-[#bfc0c2] bg-[#f4f4f4] pr-2 pl-[10px] text-[#0a7cff]">Favoris<Ic w={13} h={13} vb="0 0 13 13" sw={0}><path d="M6.500.5l1.700 4.200 4.500.2-3.500 2.800 1.200 4.400-3.900-2.500-3.900 2.500 1.200-4.400L.3 4.900l4.500-.2z" fill="currentColor" /></Ic></button>
        {['Période', 'Outils De Dessin', 'Indicateurs', 'Figures'].map((t) => <button key={t} className="w-[100px] border-r border-[#bfc0c2] whitespace-nowrap">{t}</button>)}
      </div>
      <div className="flex flex-1 justify-end text-[#666]">
        <button aria-label="Ajuster" className={`${b} w-[30px] border-l`}><Ic w={13} h={13} vb="0 0 13 13" sw={1.5}><path d="M6.500 0v6M3.500 3h6M1 9.500h11M3 7.500l-2 2 2 2M10 7.500l2 2-2 2" /></Ic></button>
        <button aria-label="Zoom arrière" className={`${b} w-[30px]`}><Ic w={9} h={9} vb="0 0 9 9" sw={1.6}><path d="M0 4.500h9" /></Ic></button>
        <button aria-label="Zoom avant" className={`${b} w-[30px]`}><Ic w={9} h={9} vb="0 0 9 9" sw={1.6}><path d="M0 4.500h9M4.500 0v9" /></Ic></button>
        <button aria-label="Curseur en croix" className={`${b} w-[30px] bg-[#efeff1] text-[#0a7cff]`}><Ic w={13} h={13} vb="0 0 13 13"><path d="M0 6.500h5.500M7.500 6.500H13M6.500 0v5.500M6.500 7.500V13" /></Ic></button>
        <button aria-label="Échelle automatique" className="flex w-[29px] shrink-0 items-center justify-center bg-[#efeff1] text-[#0a7cff]"><Ic w={13} h={13} vb="0 0 13 13" sw={1.2}><path d="M0 6.500h13M6.500 0v4.500M4.500 2.200L6.500.5l2 1.700M6.500 8.500V13M4.500 10.800l2 1.700 2-1.700" /></Ic></button>
      </div>
    </footer>
  );
}

export default function App() {
  return (
    <div className="flex h-screen flex-col overflow-hidden bg-white font-['Liberation_Sans',Arial,sans-serif]">
      <Header />
      <div className="flex h-[25px] shrink-0 gap-1 border-t border-[#9fa9bb] bg-[#b5b6b8] pt-[2px] pb-[3px] pl-[2px] text-xs text-black">
        {TABS.map(([t, w], i) => <button key={t} className={`${w} shrink-0 rounded-sm pb-[2px] whitespace-nowrap ${i === 0 ? 'bg-white text-[#0a7cff]' : 'bg-[#edeef0]'}`}>{t}</button>)}
      </div>
      <InstrumentBar />
      <Toolbar />
      <div className="flex h-[18px] shrink-0 border-b-2 border-[#dcdcdc] bg-[#f6fffe] text-sm leading-4 text-[#222]">
        <div className="relative min-w-0 flex-1">
          {TIMES.map(([t, x]) => <span key={t} className="absolute top-0 -translate-x-1/2 whitespace-nowrap" style={{ left: pctX(x) }}>{t}</span>)}
          <span className="absolute top-0 right-0 bg-black px-px whitespace-nowrap text-white">13 juil. 2024 07:08:00</span>
        </div>
        <div className="w-[84px] shrink-0" />
      </div>
      <Chart />
      <section aria-label="Outils de dessin" className="flex h-[71px] shrink-0 border-t border-[#a6a6a6] bg-[#f4f4f4]">
        <div className="w-[22px] shrink-0 border-r border-[#dcdcdc] bg-[#efefef]" />
        <div className="flex min-w-0 flex-1 overflow-hidden">
          {TOOLS.map(([t, icon]) => (
            <button key={t} className="flex w-[60px] shrink-0 flex-col items-center gap-[2px] pt-2 text-[10px] leading-3 font-bold whitespace-nowrap text-[#5f6b6b]">
              <span className="size-11 rounded-md border border-[#c3c3c3] bg-white"><svg width="42" height="42" viewBox="1 1 42 42" fill="none" aria-hidden="true">{icon}</svg></span>
              {t}
            </button>
          ))}
          {Array.from({ length: 21 }, (_, i) => <div key={i} className="w-[60px] shrink-0 px-[9px] pt-[9px]"><div className="h-[42px] rounded-md bg-[#e6e6e6]" /></div>)}
        </div>
        <div className="w-5 shrink-0 border-l border-[#dcdcdc] bg-[#efefef]" />
      </section>
      <BottomBar />
    </div>
  );
}
